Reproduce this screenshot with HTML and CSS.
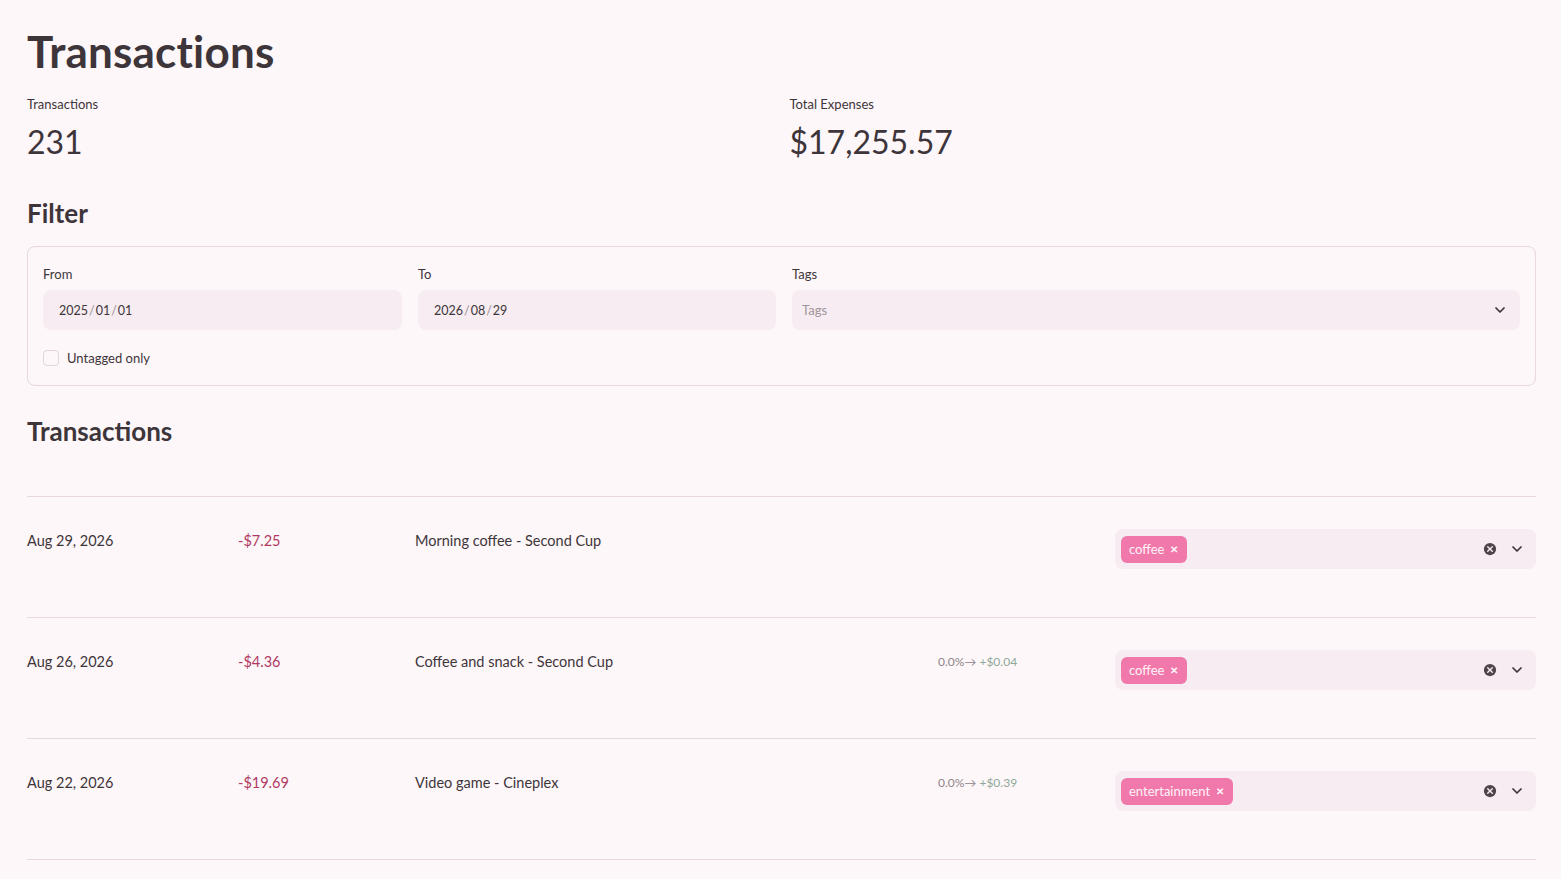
FILE: index.html
```html
<!DOCTYPE html>
<html lang="en">
<head>
<meta charset="utf-8">
<title>Transactions</title>
<link rel="stylesheet" href="styles.css">
</head>
<body>
<main class="page">
  <h1 class="title">Transactions</h1>

  <section class="metrics">
    <div class="metric">
      <div class="metric-label">Transactions</div>
      <div class="metric-value">231</div>
    </div>
    <div class="metric">
      <div class="metric-label">Total Expenses</div>
      <div class="metric-value">$17,255.57</div>
    </div>
  </section>

  <h3 class="section-title">Filter</h3>
  <section class="filter-box">
    <div class="filter-grid">
      <div class="field">
        <label class="field-label">From</label>
        <div class="input">2025<span class="sep">/</span>01<span class="sep">/</span>01</div>
      </div>
      <div class="field">
        <label class="field-label">To</label>
        <div class="input">2026<span class="sep">/</span>08<span class="sep">/</span>29</div>
      </div>
      <div class="field">
        <label class="field-label">Tags</label>
        <div class="input select">
          <span class="placeholder">Tags</span>
          <svg class="chev" viewBox="0 0 24 24" width="16" height="16"><path d="M6 9l6 6 6-6" fill="none" stroke="#3d3539" stroke-width="2.6" stroke-linecap="round" stroke-linejoin="round"/></svg>
        </div>
      </div>
    </div>
    <div class="check-row">
      <span class="checkbox"></span>
      <span class="check-label">Untagged only</span>
    </div>
  </section>

  <h3 class="section-title tx-title">Transactions</h3>

  <section class="tx-list">
    <div class="tx-row">
      <div class="tx-date">Aug 29, 2026</div>
      <div class="tx-amount">-$7.25</div>
      <div class="tx-desc">Morning coffee - Second Cup</div>
      <div class="tx-change"></div>
      <div class="tag-select">
        <span class="chip">coffee <span class="chip-x">✕</span></span>
        <span class="spacer"></span>
        <svg class="clear" viewBox="0 0 16 16" width="14" height="14"><circle cx="8" cy="8" r="7" fill="#4d4549"/><path d="M5.4 5.4l5.2 5.2M10.6 5.4l-5.2 5.2" stroke="#f6ecf1" stroke-width="1.6" stroke-linecap="round"/></svg>
        <svg class="chev" viewBox="0 0 24 24" width="16" height="16"><path d="M6 9l6 6 6-6" fill="none" stroke="#3d3539" stroke-width="2.6" stroke-linecap="round" stroke-linejoin="round"/></svg>
      </div>
    </div>
    <div class="tx-row">
      <div class="tx-date">Aug 26, 2026</div>
      <div class="tx-amount">-$4.36</div>
      <div class="tx-desc">Coffee and snack - Second Cup</div>
      <div class="tx-change"><span class="pct">0.0%→</span> <span class="gain">+$0.04</span></div>
      <div class="tag-select">
        <span class="chip">coffee <span class="chip-x">✕</span></span>
        <span class="spacer"></span>
        <svg class="clear" viewBox="0 0 16 16" width="14" height="14"><circle cx="8" cy="8" r="7" fill="#4d4549"/><path d="M5.4 5.4l5.2 5.2M10.6 5.4l-5.2 5.2" stroke="#f6ecf1" stroke-width="1.6" stroke-linecap="round"/></svg>
        <svg class="chev" viewBox="0 0 24 24" width="16" height="16"><path d="M6 9l6 6 6-6" fill="none" stroke="#3d3539" stroke-width="2.6" stroke-linecap="round" stroke-linejoin="round"/></svg>
      </div>
    </div>
    <div class="tx-row">
      <div class="tx-date">Aug 22, 2026</div>
      <div class="tx-amount">-$19.69</div>
      <div class="tx-desc">Video game - Cineplex</div>
      <div class="tx-change"><span class="pct">0.0%→</span> <span class="gain">+$0.39</span></div>
      <div class="tag-select">
        <span class="chip">entertainment <span class="chip-x">✕</span></span>
        <span class="spacer"></span>
        <svg class="clear" viewBox="0 0 16 16" width="14" height="14"><circle cx="8" cy="8" r="7" fill="#4d4549"/><path d="M5.4 5.4l5.2 5.2M10.6 5.4l-5.2 5.2" stroke="#f6ecf1" stroke-width="1.6" stroke-linecap="round"/></svg>
        <svg class="chev" viewBox="0 0 24 24" width="16" height="16"><path d="M6 9l6 6 6-6" fill="none" stroke="#3d3539" stroke-width="2.6" stroke-linecap="round" stroke-linejoin="round"/></svg>
      </div>
    </div>
  </section>
</main>
</body>
</html>
```

FILE: styles.css
```css
* { box-sizing: border-box; }

html, body {
  margin: 0;
  padding: 0;
  background: #fdf7f9;
  color: #3d3539;
  font-family: "Lato", "Noto Sans", sans-serif;
  overflow: hidden;
}

.page {
  padding: 0 25px 0 27px;
  width: 1561px;
}

.title {
  margin: 0;
  padding: 25px 0 0;
  font-size: 44px;
  line-height: 52px;
  font-weight: 700;
  letter-spacing: 0.2px;
}

.metrics {
  display: grid;
  grid-template-columns: 1fr 1fr;
  gap: 16px;
  margin-top: 19px;
}

.metric-label {
  font-size: 13px;
  line-height: 16px;
}

.metric-value {
  font-size: 32px;
  line-height: 44px;
  margin-top: 8px;
  font-weight: 400;
}

.section-title {
  margin: 0;
  font-size: 26px;
  line-height: 36px;
  font-weight: 700;
  padding-top: 31px;
}

.filter-box {
  margin-top: 15px;
  border: 1px solid #e8d7df;
  border-radius: 8px;
  padding: 17px 15px 19px;
}

.filter-grid {
  display: grid;
  grid-template-columns: 359fr 358fr 728fr;
  gap: 16px;
}

.field-label {
  display: block;
  font-size: 13px;
  line-height: 20px;
  margin-bottom: 6px;
}

.input {
  height: 40px;
  border-radius: 8px;
  background: #f6ecf1;
  display: flex;
  align-items: center;
  padding: 0 16px;
  font-size: 12.5px;
}

.sep {
  color: #9a9095;
  margin: 0 1px;
}

.select {
  padding: 0 12px 0 10px;
  justify-content: space-between;
}

.placeholder {
  color: #a0969b;
  font-size: 13px;
}

.check-row {
  display: flex;
  align-items: center;
  margin-top: 20px;
  gap: 8px;
}

.checkbox {
  width: 16px;
  height: 16px;
  border: 1px solid #e3d3da;
  border-radius: 4px;
  background: #fdf7f9;
}

.check-label {
  font-size: 13px;
  line-height: 16px;
}

.tx-title {
  padding-top: 27px;
}

.tx-list {
  margin-top: 47px;
  border-top: 1px solid #e8d7df;
}

.tx-row {
  display: grid;
  grid-template-columns: 195fr 161fr 507fr 161fr 421fr;
  gap: 16px;
  padding: 32px 0 48px;
  border-bottom: 1px solid #e8d7df;
  font-size: 14.5px;
  line-height: 24px;
}

.tx-amount {
  color: #b03a62;
}

.tx-change {
  font-size: 12px;
  line-height: 24px;
  color: #8e8489;
  margin-top: 0;
}

.gain {
  color: #8fa99a;
}

.tag-select {
  height: 40px;
  border-radius: 8px;
  background: #f6ecf1;
  display: flex;
  align-items: center;
  padding: 0 11px 0 6px;
}

.chip {
  background: #f178ab;
  color: #fff4f8;
  border-radius: 6px;
  height: 27px;
  display: inline-flex;
  align-items: center;
  padding: 0 9px 0 8px;
  font-size: 13px;
  gap: 6px;
}

.chip-x {
  font-size: 10px;
  font-weight: 700;
}

.spacer {
  flex: 1;
}

.clear {
  margin-right: 12px;
}
```
